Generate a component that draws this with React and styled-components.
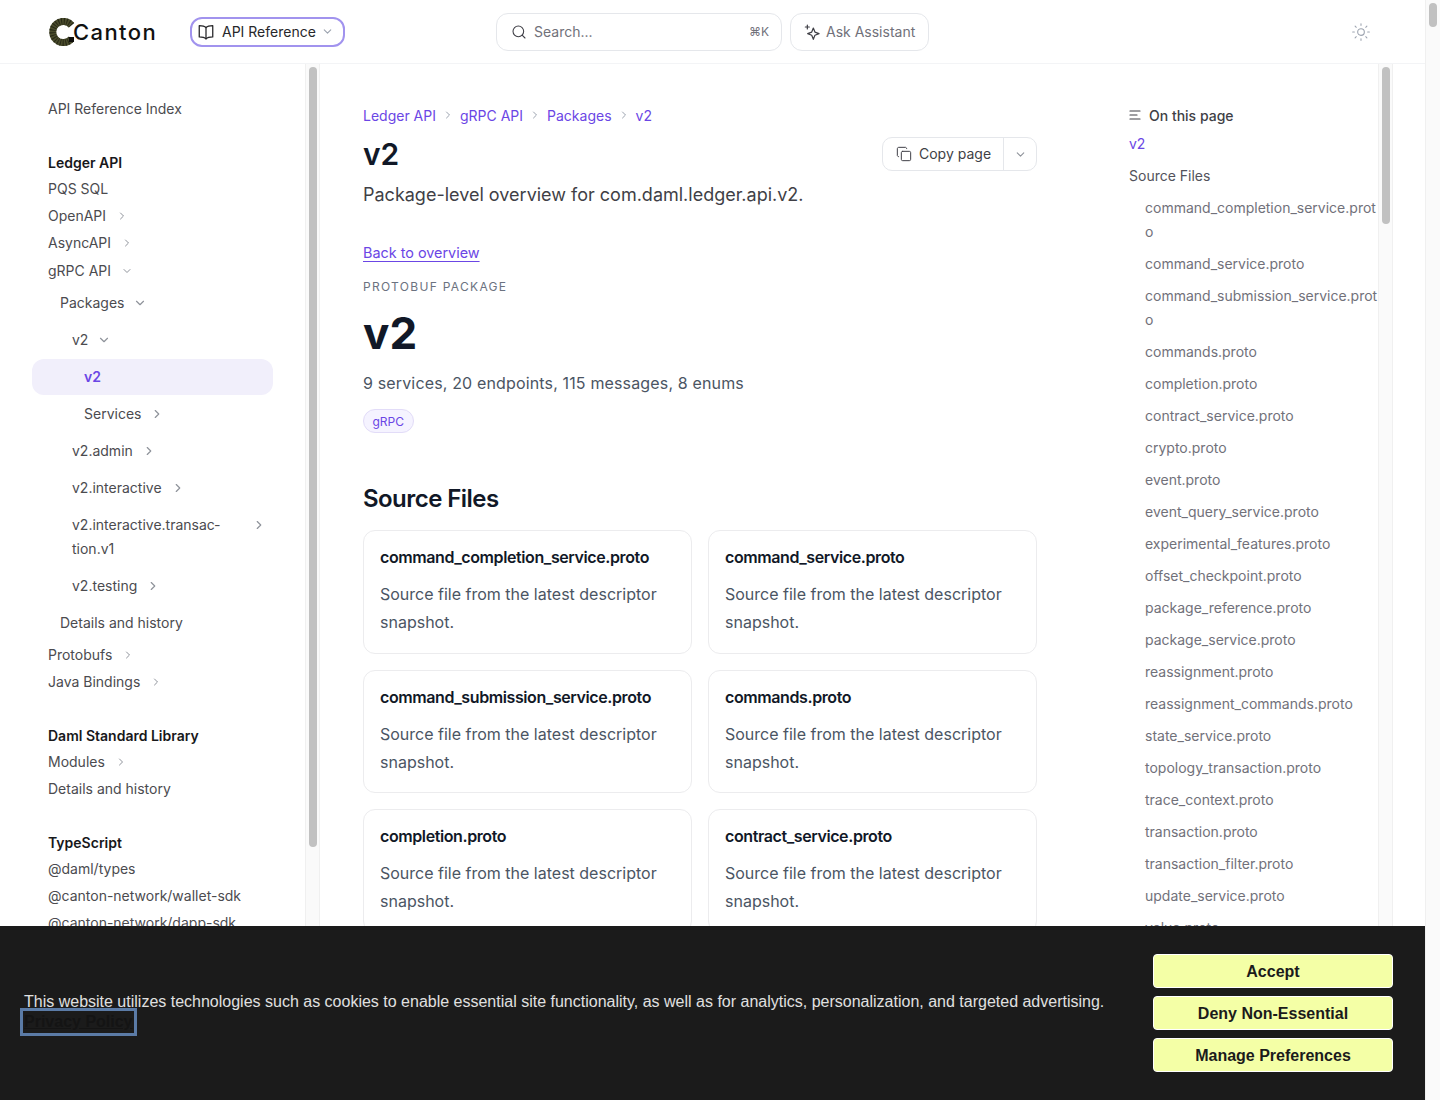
import React from 'react';
import styled, { createGlobalStyle } from 'styled-components';
import { ChevronDown, ChevronRight, Search, Copy, Sun } from 'lucide-react';

const Global = createGlobalStyle`
  html, body { margin: 0; padding: 0; height: 100%; overflow: hidden; background: #fff; }
  body { font-family: Inter, "Noto Sans", sans-serif; color: #111827; }
  * { box-sizing: border-box; }
`;

const Screen = styled.div`display: flex; width: 1440px; height: 1100px; overflow: hidden;`;
const Page = styled.div`width: 1425px; height: 1100px; display: flex; flex-direction: column; background: #fff;`;
const Track = styled.div`
  flex: none; width: 15px; background: #fafafa; padding: 3px;
  border-left: 1px solid #f0f0f0; border-right: ${p => (p.$edge ? '1px solid #f0f0f0' : 'none')};
`;
const Thumb = styled.div`width: 8px; height: ${p => p.$h}px; border-radius: 4px; background: #c1c1c1;`;

const Header = styled.header`
  flex: none; height: 64px; border-bottom: 1px solid #f3f4f6; display: flex; align-items: center; padding-left: 48px;
`;
const LogoWrap = styled.div`display: flex; align-items: center; width: 142px;`;
const LogoText = styled.span`
  font-family: Inter, sans-serif; font-size: 22px; font-weight: 500; color: #111; letter-spacing: 1.4px; margin-left: -2px;
`;
const DocButton = styled.button`
  display: flex; align-items: center; width: 155px; height: 30px; padding: 0 0 0 5px; background: #fff;
  border: 2px solid #a193ee; border-radius: 12px; font: 400 14px Inter, sans-serif; color: #27272a;
`;
const DocLabel = styled.span`margin: 0 5px 0 7px;`;
const Middle = styled.div`display: flex; align-items: center; gap: 8px; margin-left: 151px;`;
const SearchBox = styled.div`
  display: flex; align-items: center; width: 286px; height: 38px; padding: 0 12px 0 14px;
  border: 1px solid #e5e7eb; border-radius: 12px; color: #71717a; font-size: 14px;
`;
const SearchLabel = styled.span`flex: 1; margin-left: 7px;`;
const Kbd = styled.span`font-size: 12px; color: #71717a;`;
const AskButton = styled.button`
  display: flex; align-items: center; gap: 6px; height: 38px; width: 139px; padding: 0 0 0 13px; background: #fff;
  border: 1px solid #e5e7eb; border-radius: 12px; font: 400 14px Inter, sans-serif; color: #71717a;
`;
const ThemeToggle = styled.div`display: flex; margin-left: 422px; color: #9ca3af;`;

const Body = styled.div`flex: 1; min-height: 0; display: flex;`;
const Sidebar = styled.nav`width: 305px; flex: none; padding: 33px 32px 0; overflow: hidden;`;
const NavRow = styled.div`
  display: flex; align-items: center; min-height: ${p => (p.$active ? 36 : 24)}px; line-height: 24px;
  margin-top: ${p => (p.$active ? p.$gap - 6 : p.$gap)}px; margin-bottom: ${p => (p.$active ? -6 : 0)}px;
  padding: 0 0 0 ${p => 16 + p.$level * 12}px;
  font-size: 14px;
  color: ${p => (p.$active ? '#6b46e5' : p.$heading ? '#18181b' : '#4b4b4f')};
  font-weight: ${p => (p.$active || p.$heading ? 600 : 400)};
  background: ${p => (p.$active ? '#f1effb' : 'transparent')};
  border-radius: 12px;
`;
const NavText = styled.span`flex: ${p => (p.$wrap ? 1 : 'none')}; ${p => p.$wrap && 'padding-right: 12px;'}`;
const Caret = styled.span`
  display: flex; color: #8f939b; flex: none; margin-left: ${p => p.$left}px;
  margin-right: ${p => (p.$wrap ? 7 : 0)}px; ${p => p.$wrap && 'align-self: flex-start; margin-top: 5px;'}
`;

const Main = styled.main`flex: none; width: 1058px; height: 100%; display: flex; overflow: hidden;`;
const Article = styled.article`flex: none; width: 764px; padding: 39px 0 0 43px; height: 100%; overflow: hidden;`;
const Content = styled.div`width: 674px;`;
const Crumbs = styled.div`display: flex; align-items: center; gap: 6px; height: 24px; font-size: 14px; color: #6b46e5;`;
const CrumbSep = styled.span`display: flex; color: #9ca3af;`;
const TitleRow = styled.div`display: flex; align-items: center; justify-content: space-between; margin-top: 10px; height: 34px;`;
const Title = styled.h1`margin: 0; font-size: 30px; line-height: 34px; font-weight: 600; color: #111827;`;
const CopyGroup = styled.div`
  display: flex; align-items: center; height: 34px; width: 155px; border: 1px solid #e5e7eb; border-radius: 10px; color: #3f3f46; font-size: 14px;
`;
const CopyMain = styled.div`display: flex; align-items: center; gap: 7px; width: 121px; height: 100%; padding: 0 0 1px 13px; border-right: 1px solid #e5e7eb;`;
const CopyCaret = styled.div`flex: 1; display: flex; align-items: center; justify-content: center; color: #8f939b;`;
const Lead = styled.p`margin: 10px 0 0; font-size: 18px; line-height: 28px; color: #3f3f46;`;
const BackLink = styled.a`display: inline-block; margin-top: 32px; font-size: 14.4px; line-height: 24px; color: #6b46e5; text-decoration: underline; text-underline-offset: 3px;`;
const Overline = styled.div`margin-top: 14px; font-size: 12px; line-height: 16px; letter-spacing: 1.3px; color: #6b7280; text-transform: uppercase;`;
const Hero = styled.h2`margin: 14px 0 0; font-size: 44px; line-height: 48px; font-weight: 700; color: #111827;`;
const Summary = styled.p`margin: 12px 0 0; font-size: 16px; line-height: 28px; letter-spacing: 0.15px; color: #4b5563;`;
const Badge = styled.span`
  display: inline-flex; align-items: center; margin-top: 12px; height: 24px; padding: 0 8.5px; border-radius: 12px;
  background: #f5f3ff; border: 1px solid #e2dcf8; color: #6b46e5; font-size: 12px;
`;
const Section = styled.h2`margin: 50px 0 0; font-size: 24px; line-height: 32px; font-weight: 600; letter-spacing: -0.55px; color: #111827;`;
const Cards = styled.div`display: grid; grid-template-columns: 329px 329px; gap: 16px; margin-top: 15px;`;
const Card = styled.div`border: 1px solid #ececee; border-radius: 12px; padding: 14px 16px 16px; height: 123.5px;`;
const CardTitle = styled.div`font-size: 16px; line-height: 24px; font-weight: 600; letter-spacing: -0.4px; color: #111827;`;
const CardText = styled.p`margin: 11px 0 0; font-size: 16px; line-height: 28px; color: #4b5563;`;

const Toc = styled.aside`flex: 1; padding: 39px 0 0 45px; overflow: hidden; font-size: 14px; color: #52525b;`;
const TocHead = styled.div`display: flex; align-items: center; gap: 8px; height: 24px; color: #3f3f46; font-weight: 500;`;
const TocLink = styled.div`
  line-height: 24px; margin-top: ${p => p.$gap}px; padding-left: ${p => (p.$sub ? 16 : 0)}px; overflow-wrap: anywhere;
  color: ${p => (p.$current ? '#6b46e5' : p.$sub ? '#71717a' : '#52525b')};
`;

const Banner = styled.div`
  position: fixed; left: 0; top: 926px; width: 1425px; height: 174px; background: #1b1b1b; display: flex; align-items: center;
  padding: 0 32px 0 24px; font-family: "Liberation Sans", Arial, sans-serif;
`;
const BannerText = styled.div`flex: 1; font-size: 16px; line-height: 20px; color: #e0e0e0; margin-top: -1px;`;
const Policy = styled.a`
  display: inline-block; font-weight: 700; line-height: 22px; color: #141414; text-decoration: underline;
  outline: 3px solid #5b7ba6; padding: 0 1px; margin: -1px 0 0 -1px; vertical-align: top;
`;
const BannerActions = styled.div`flex: none; display: flex; flex-direction: column; gap: 8px; width: 240px;`;
const BannerButton = styled.button`
  height: 34px; padding: 2px 0 0; border: 1px solid #fff; border-radius: 4px; background: #f4ffa6; color: #1b1b1b;
  font: 700 16px "Liberation Sans", Arial, sans-serif;
`;

const nav = [
  { t: 'API Reference Index', l: 0, g: 0 },
  { t: 'Ledger API', l: 0, g: 30, h: 1 },
  { t: 'PQS SQL', l: 0, g: 2 },
  { t: 'OpenAPI', l: 0, g: 3, c: 'r' },
  { t: 'AsyncAPI', l: 0, g: 3, c: 'r' },
  { t: 'gRPC API', l: 0, g: 4, c: 'd' },
  { t: 'Packages', l: 1, g: 8, c: 'd' },
  { t: 'v2', l: 2, g: 13, c: 'd' },
  { t: 'v2', l: 3, g: 13, a: 1 },
  { t: 'Services', l: 3, g: 13, c: 'r' },
  { t: 'v2.admin', l: 2, g: 13, c: 'r' },
  { t: 'v2.interactive', l: 2, g: 13, c: 'r' },
  { t: 'v2.interactive.transac\u00adtion.v1', l: 2, g: 13, c: 'r', w: 1 },
  { t: 'v2.testing', l: 2, g: 13, c: 'r' },
  { t: 'Details and history', l: 1, g: 13 },
  { t: 'Protobufs', l: 0, g: 8, c: 'r' },
  { t: 'Java Bindings', l: 0, g: 3, c: 'r' },
  { t: 'Daml Standard Library', l: 0, g: 30, h: 1 },
  { t: 'Modules', l: 0, g: 2, c: 'r' },
  { t: 'Details and history', l: 0, g: 3 },
  { t: 'TypeScript', l: 0, g: 30, h: 1 },
  { t: '@daml/types', l: 0, g: 2 },
  { t: '@canton-network/wallet-sdk', l: 0, g: 3 },
  { t: '@canton-network/dapp-sdk', l: 0, g: 3 },
];

const protos = ['command_completion_service.proto','command_service.proto','command_submission_service.proto','commands.proto','completion.proto','contract_service.proto','crypto.proto','event.proto','event_query_service.proto','experimental_features.proto','offset_checkpoint.proto','package_reference.proto','package_service.proto','reassignment.proto','reassignment_commands.proto','state_service.proto','topology_transaction.proto','trace_context.proto','transaction.proto','transaction_filter.proto','update_service.proto','value.proto'];

const cPath = 'M23.5 7.2A10.6 10.6 0 1 0 23.5 20.8';
const Logo = () => (
  <svg width="27" height="28" viewBox="0 0 27 28" fill="none">
    <path d={cPath} stroke="#4a4c2c" strokeWidth="7" />
    <path d={cPath} stroke="#1c1d10" strokeWidth="7" strokeDasharray="1 1.6" opacity="0.75" />
    <rect x="21" y="19" width="5" height="5" fill="#0e0e0a" />
  </svg>
);

const BookIcon = () => (
  <svg width="18" height="18" viewBox="0 0 24 24" fill="none" stroke="currentColor" strokeWidth="1.7" strokeLinejoin="round" strokeLinecap="round">
    <path d="M12 6v15" />
    <path d="M12 6 C10.5 4.5 8 3.5 3 3.5 V18.5 C8 18.5 10.5 19.5 12 21 C13.5 19.5 16 18.5 21 18.5 V3.5 C16 3.5 13.5 4.5 12 6 Z" />
  </svg>
);

const SparkIcon = () => (
  <svg width="16" height="16" viewBox="0 0 24 24" fill="none" stroke="#3f3f46" strokeWidth="1.8" strokeLinejoin="round" strokeLinecap="round">
    <path d="M14 6 L16.4 12.1 L22.5 14.5 L16.4 16.9 L14 23 L11.6 16.9 L5.5 14.5 L11.6 12.1 Z" />
    <path d="M5 1.5v6M2 4.5h6" />
  </svg>
);

const OutlineIcon = () => (
  <svg width="12" height="12" viewBox="0 0 12 12" fill="none" stroke="#3f3f46" strokeWidth="1.2" strokeLinecap="round">
    <path d="M1 2h10M1 6h7M1 10h10" />
  </svg>
);

export default function App() {
  return (
    <Screen>
      <Global />
      <Page>
        <Header>
          <LogoWrap><Logo /><LogoText>Canton</LogoText></LogoWrap>
          <DocButton><BookIcon /><DocLabel>API Reference</DocLabel><ChevronDown size={13} color="#9ca3af" /></DocButton>
          <Middle>
            <SearchBox><Search size={16} strokeWidth={1.6} color="#3f3f46" /><SearchLabel>Search...</SearchLabel><Kbd>⌘K</Kbd></SearchBox>
            <AskButton><SparkIcon />Ask Assistant</AskButton>
          </Middle>
          <ThemeToggle><Sun size={20} strokeWidth={1.3} /></ThemeToggle>
        </Header>
        <Body>
          <Sidebar>
            {nav.map((n, i) => {
              const size = n.l === 0 ? 12 : 14;
              const Icon = n.c === 'r' ? ChevronRight : ChevronDown;
              return (
                <NavRow key={i} $level={n.l} $gap={n.g} $heading={n.h} $active={n.a}>
                  <NavText $wrap={n.w}>{n.t}</NavText>
                  {n.c && <Caret $wrap={n.w} $left={16 - size / 2}><Icon size={size} /></Caret>}
                </NavRow>
              );
            })}
          </Sidebar>
          <Track $edge><Thumb $h={780} /></Track>
          <Main>
            <Article>
              <Content>
                <Crumbs>
                  <span>Ledger API</span><CrumbSep><ChevronRight size={12} /></CrumbSep>
                  <span>gRPC API</span><CrumbSep><ChevronRight size={12} /></CrumbSep>
                  <span>Packages</span><CrumbSep><ChevronRight size={12} /></CrumbSep>
                  <span>v2</span>
                </Crumbs>
                <TitleRow>
                  <Title>v2</Title>
                  <CopyGroup><CopyMain><Copy size={16} strokeWidth={1.5} />Copy page</CopyMain><CopyCaret><ChevronDown size={13} /></CopyCaret></CopyGroup>
                </TitleRow>
                <Lead>Package-level overview for com.daml.ledger.api.v2.</Lead>
                <BackLink>Back to overview</BackLink>
                <Overline>Protobuf package</Overline>
                <Hero>v2</Hero>
                <Summary>9 services, 20 endpoints, 115 messages, 8 enums</Summary>
                <Badge>gRPC</Badge>
                <Section>Source Files</Section>
                <Cards>
                  {protos.slice(0, 6).map(p => (
                    <Card key={p}><CardTitle>{p}</CardTitle><CardText>Source file from the latest descriptor snapshot.</CardText></Card>
                  ))}
                </Cards>
              </Content>
            </Article>
            <Toc>
              <TocHead><OutlineIcon />On this page</TocHead>
              <TocLink $gap={5} $current>v2</TocLink>
              <TocLink $gap={8}>Source Files</TocLink>
              {protos.map(p => <TocLink key={p} $gap={8} $sub>{p}</TocLink>)}
            </Toc>
          </Main>
          <Track $edge><Thumb $h={157} /></Track>
        </Body>
      </Page>
      <Track><Thumb $h={24} /></Track>
      <Banner>
        <BannerText>
          This website utilizes technologies such as cookies to enable essential site functionality, as well as for analytics, personalization, and targeted advertising.
          <br /><Policy>Privacy Policy</Policy>
        </BannerText>
        <BannerActions>
          <BannerButton>Accept</BannerButton>
          <BannerButton>Deny Non-Essential</BannerButton>
          <BannerButton>Manage Preferences</BannerButton>
        </BannerActions>
      </Banner>
    </Screen>
  );
}
